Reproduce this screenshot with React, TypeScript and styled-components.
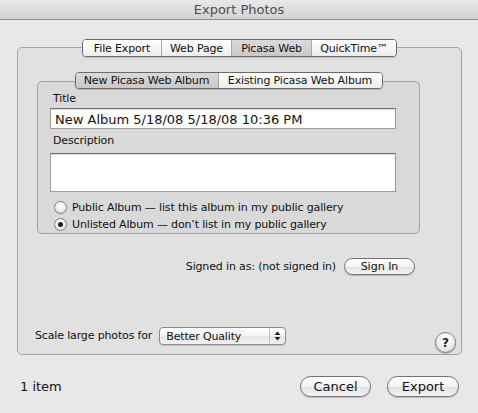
import React from 'react';
import styled, { createGlobalStyle } from 'styled-components';

const GlobalStyle = createGlobalStyle`
   html, body {
      margin: 0;
      padding: 0;
      background: #e8e8e8;
   }
   * {
      box-sizing: border-box;
   }
`;

const Window = styled.div`
   width: 478px;
   height: 413px;
   display: flex;
   flex-direction: column;
   background: #e8e8e8;
   font-family: 'DejaVu Sans', 'Liberation Sans', sans-serif;
   font-size: 11px;
   letter-spacing: -0.15px;
   color: #111;
   overflow: hidden;
`;

const TitleBar = styled.div`
   height: 20px;
   flex-shrink: 0;
   display: flex;
   align-items: center;
   justify-content: center;
   font-size: 13px;
   letter-spacing: 0;
   color: #4d4d4d;
   background: linear-gradient(#e9e9e9, #d2d2d2);
   border-bottom: 1px solid #8c8c8c;
`;

const Body = styled.div`
   padding: 19px 16px 0 17px;
`;

const TabGroup = styled.div<{ width?: number }>`
   display: flex;
   flex-direction: column;
   align-items: center;
   width: ${props => (props.width ? props.width + 'px' : 'auto')};
`;

const TabRow = styled.div<{ height: number }>`
   position: relative;
   z-index: 1;
   display: flex;
   height: ${props => props.height}px;
   border: 1px solid #6a6a6a;
   border-radius: 4px;
   overflow: hidden;
   box-shadow: 0 1px 1px rgba(0, 0, 0, 0.15);
`;

const Tab = styled.div<{ selected?: boolean; width: number }>`
   width: ${props => props.width}px;
   display: flex;
   align-items: center;
   justify-content: center;
   white-space: nowrap;
   font-size: 11px;
   color: #111;
   background: ${props =>
      props.selected ? 'linear-gradient(#dadada, #c9c9c9)' : 'linear-gradient(#ffffff, #ececec)'};

   & + & {
      border-left: 1px solid #a9a9a9;
   }
`;

const OuterPanel = styled.div`
   align-self: stretch;
   height: 308px;
   margin-top: -10px;
   padding: 24px 5px 0 19px;
   display: flex;
   flex-direction: column;
   background: #e1e1e1;
   border: 1px solid #a6a6a6;
   border-radius: 5px;
`;

const InnerPanel = styled.div`
   align-self: stretch;
   margin-top: -8px;
   padding: 10px 23px 0 12px;
   display: flex;
   flex-direction: column;
   background: #d9d9d9;
   border: 1px solid #a3a3a3;
   border-radius: 5px;
`;

const Label = styled.div<{ gap?: number }>`
   height: 14px;
   line-height: 14px;
   padding-left: 3px;
   margin-top: ${props => props.gap || 0}px;
`;

const TextField = styled.div<{ height: number; gap: number }>`
   height: ${props => props.height}px;
   margin-top: ${props => props.gap}px;
   padding: 2px 4px 0;
   font-size: 13px;
   letter-spacing: 0;
   line-height: 17px;
   background: #fff;
   border: 1px solid #9c9c9c;
   border-top-color: #6e6e6e;
   box-shadow: inset 0 1px 1px rgba(0, 0, 0, 0.15);
`;

const RadioList = styled.div`
   margin-top: 7px;
   display: flex;
   flex-direction: column;
`;

const RadioRow = styled.div`
   height: 17px;
   display: flex;
   align-items: center;
   gap: 5px;
   padding-left: 4px;
`;

const RadioCircle = styled.span<{ checked?: boolean }>`
   width: 13px;
   height: 13px;
   border-radius: 50%;
   border: 1px solid #7d7d7d;
   background: radial-gradient(circle at 50% 35%, #ffffff 0%, #f2f2f2 45%, #cfcfcf 100%);
   display: flex;
   align-items: center;
   justify-content: center;

   &::after {
      content: '';
      width: 5px;
      height: 5px;
      border-radius: 50%;
      background: ${props => (props.checked ? '#1e1e1e' : 'transparent')};
   }
`;

const SignInRow = styled.div`
   width: 383px;
   margin-top: 24px;
   padding-right: 5px;
   display: flex;
   align-items: center;
   justify-content: flex-end;
   gap: 8px;
`;

const PillButton = styled.div<{ width: number; height: number; size: number }>`
   width: ${props => props.width}px;
   height: ${props => props.height}px;
   display: flex;
   align-items: center;
   justify-content: center;
   font-size: ${props => props.size}px;
   letter-spacing: 0;
   color: #111;
   border: 1px solid #737373;
   border-radius: ${props => props.height / 2}px;
   background: linear-gradient(#ffffff 0%, #f3f3f3 50%, #e3e3e3 51%, #f4f4f4 100%);
   box-shadow: 0 1px 1px rgba(0, 0, 0, 0.2);
`;

const Spacer = styled.div`
   flex: 1;
`;

const ScaleRow = styled.div`
   display: flex;
   align-items: flex-end;
   margin-left: -2px;
`;

const ScaleLabel = styled.span`
   line-height: 14px;
   margin-right: 7px;
   margin-bottom: 11px;
`;

const PopUp = styled.div`
   width: 127px;
   height: 18px;
   display: flex;
   align-items: stretch;
   border: 1px solid #8a8a8a;
   border-radius: 4px;
   background: linear-gradient(#ffffff 0%, #f4f4f4 50%, #e6e6e6 51%, #f1f1f1 100%);
   box-shadow: 0 1px 1px rgba(0, 0, 0, 0.15);
   margin-bottom: 9px;
`;

const PopUpValue = styled.span`
   flex: 1;
   display: flex;
   align-items: center;
   padding-left: 6px;
`;

const PopUpArrows = styled.span`
   width: 16px;
   display: flex;
   align-items: center;
   justify-content: center;
   border-left: 1px solid #c4c4c4;
`;

const HelpButton = styled.div`
   width: 21px;
   height: 21px;
   margin-left: auto;
   margin-bottom: 1px;
   display: flex;
   align-items: center;
   justify-content: center;
   border-radius: 50%;
   border: 1px solid #7c7c7c;
   background: radial-gradient(circle at 50% 30%, #ffffff 0%, #f1f1f1 50%, #cdcdcd 100%);
   box-shadow: 0 1px 1px rgba(0, 0, 0, 0.25);
   font-size: 12px;
   font-weight: bold;
   color: #222;
`;

const Footer = styled.div`
   margin-top: 21px;
   padding: 0 19px 0 20px;
   height: 21px;
   display: flex;
   align-items: center;
   gap: 16px;
   font-size: 13px;
   letter-spacing: 0;
`;

const ItemCount = styled.span`
   margin-right: auto;
`;

export default function App() {
   return (
      <>
         <GlobalStyle />
         <Window>
            <TitleBar>Export Photos</TitleBar>
            <Body>
               <TabGroup>
                  <TabRow height={18}>
                     <Tab width={78}>File Export</Tab>
                     <Tab width={70}>Web Page</Tab>
                     <Tab width={80} selected>
                        Picasa Web
                     </Tab>
                     <Tab width={85}>QuickTime™</Tab>
                  </TabRow>
                  <OuterPanel>
                     <TabGroup width={383}>
                        <TabRow height={17}>
                           <Tab width={142} selected>
                              New Picasa Web Album
                           </Tab>
                           <Tab width={164}>Existing Picasa Web Album</Tab>
                        </TabRow>
                        <InnerPanel>
                           <Label>Title</Label>
                           <TextField height={21} gap={2}>
                              New Album 5/18/08 5/18/08 10:36 PM
                           </TextField>
                           <Label gap={5}>Description</Label>
                           <TextField height={39} gap={5} />
                           <RadioList>
                              <RadioRow>
                                 <RadioCircle />
                                 Public Album — list this album in my public gallery
                              </RadioRow>
                              <RadioRow>
                                 <RadioCircle checked />
                                 Unlisted Album — don’t list in my public gallery
                              </RadioRow>
                           </RadioList>
                        </InnerPanel>
                     </TabGroup>
                     <SignInRow>
                        <span>Signed in as: (not signed in)</span>
                        <PillButton width={71} height={17} size={11}>
                           Sign In
                        </PillButton>
                     </SignInRow>
                     <Spacer />
                     <ScaleRow>
                        <ScaleLabel>Scale large photos for</ScaleLabel>
                        <PopUp>
                           <PopUpValue>Better Quality</PopUpValue>
                           <PopUpArrows>
                              <svg width="7" height="10" viewBox="0 0 7 10">
                                 <path d="M3.5 0.5 L6.5 4 L0.5 4 Z" fill="#222" />
                                 <path d="M3.5 9.5 L6.5 6 L0.5 6 Z" fill="#222" />
                              </svg>
                           </PopUpArrows>
                        </PopUp>
                        <HelpButton>?</HelpButton>
                     </ScaleRow>
                  </OuterPanel>
               </TabGroup>
            </Body>
            <Footer>
               <ItemCount>1 item</ItemCount>
               <PillButton width={71} height={21} size={13}>
                  Cancel
               </PillButton>
               <PillButton width={72} height={21} size={13}>
                  Export
               </PillButton>
            </Footer>
         </Window>
      </>
   );
}
